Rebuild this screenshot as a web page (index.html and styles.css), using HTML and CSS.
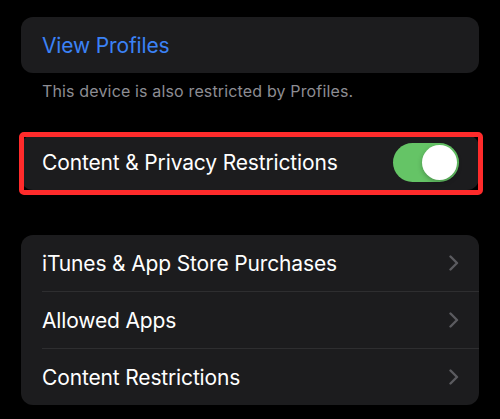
FILE: index.html
```html
<!DOCTYPE html>
<html>
  <head>
    <title>Screen Time</title>
    <link rel="stylesheet" href="styles.css">
  </head>
  <body>
    <div class="page">
      <div class="group">
        <a class="row link">View Profiles</a>
      </div>
      <p class="footnote">This device is also restricted by Profiles.</p>

      <div class="group highlight">
        <div class="row">
          <span class="label">Content &amp; Privacy Restrictions</span>
          <span class="switch on"><span class="knob"></span></span>
        </div>
      </div>

      <div class="group list">
        <div class="row">
          <div class="row-body">
            <span class="label">iTunes &amp; App Store Purchases</span>
            <svg class="chevron" viewBox="0 0 10 16"><polyline points="1.5,1.5 8,8 1.5,14.5" /></svg>
          </div>
        </div>
        <div class="row">
          <div class="row-body">
            <span class="label">Allowed Apps</span>
            <svg class="chevron" viewBox="0 0 10 16"><polyline points="1.5,1.5 8,8 1.5,14.5" /></svg>
          </div>
        </div>
        <div class="row">
          <div class="row-body">
            <span class="label">Content Restrictions</span>
            <svg class="chevron" viewBox="0 0 10 16"><polyline points="1.5,1.5 8,8 1.5,14.5" /></svg>
          </div>
        </div>
      </div>
    </div>
  </body>
</html>
```

FILE: styles.css
```css
/* iOS dark settings list */
body {
  margin: 0;
  background: #000;
  font-family: Inter, "Noto Sans", sans-serif;
  color: #fff;
}
.page {
  padding: 17px 21px;
}
.group {
  position: relative;
  background: #1c1c1e;
  border-radius: 12px;
}
.row {
  display: flex;
  align-items: center;
  height: 56px;
  padding: 0 20px 0 21px;
  font-size: 21px;
  letter-spacing: -0.15px;
}
.link {
  color: #3b82f6;
}
.footnote {
  margin: 0;
  padding: 8px 21px 0;
  font-size: 16px;
  line-height: 20px;
  letter-spacing: 0.15px;
  color: #8d8d93;
}

/* toggle row with red callout */
.highlight {
  margin-top: 34px;
}
.highlight .row {
  height: 55px;
  justify-content: space-between;
}
.highlight::after {
  content: '';
  position: absolute;
  left: -2px;
  right: -4px;
  top: -3px;
  bottom: -5px;
  border: 5px solid #ff2b2b;
  border-radius: 5px;
}
.switch {
  position: relative;
  width: 66px;
  height: 39px;
  border-radius: 20px;
  background: #65c466;
}
.switch .knob {
  position: absolute;
  right: 2px;
  top: 2px;
  width: 35px;
  height: 35px;
  border-radius: 50%;
  background: #fff;
  box-shadow: 0 2px 5px rgba(0, 0, 0, 0.25);
}

/* navigation list */
.list {
  margin-top: 45px;
}
.list .row {
  padding-right: 0;
  height: auto;
}
.row-body {
  flex: 1;
  display: flex;
  align-items: center;
  justify-content: space-between;
  height: 56px;
  padding-right: 20px;
  border-bottom: 1px solid #2e2e30;
}
.list .row:last-child .row-body {
  border-bottom: none;
}
.chevron {
  width: 10px;
  height: 16px;
  fill: none;
  stroke: #5b5b5f;
  stroke-width: 2.4;
  stroke-linecap: round;
  stroke-linejoin: round;
}
```
